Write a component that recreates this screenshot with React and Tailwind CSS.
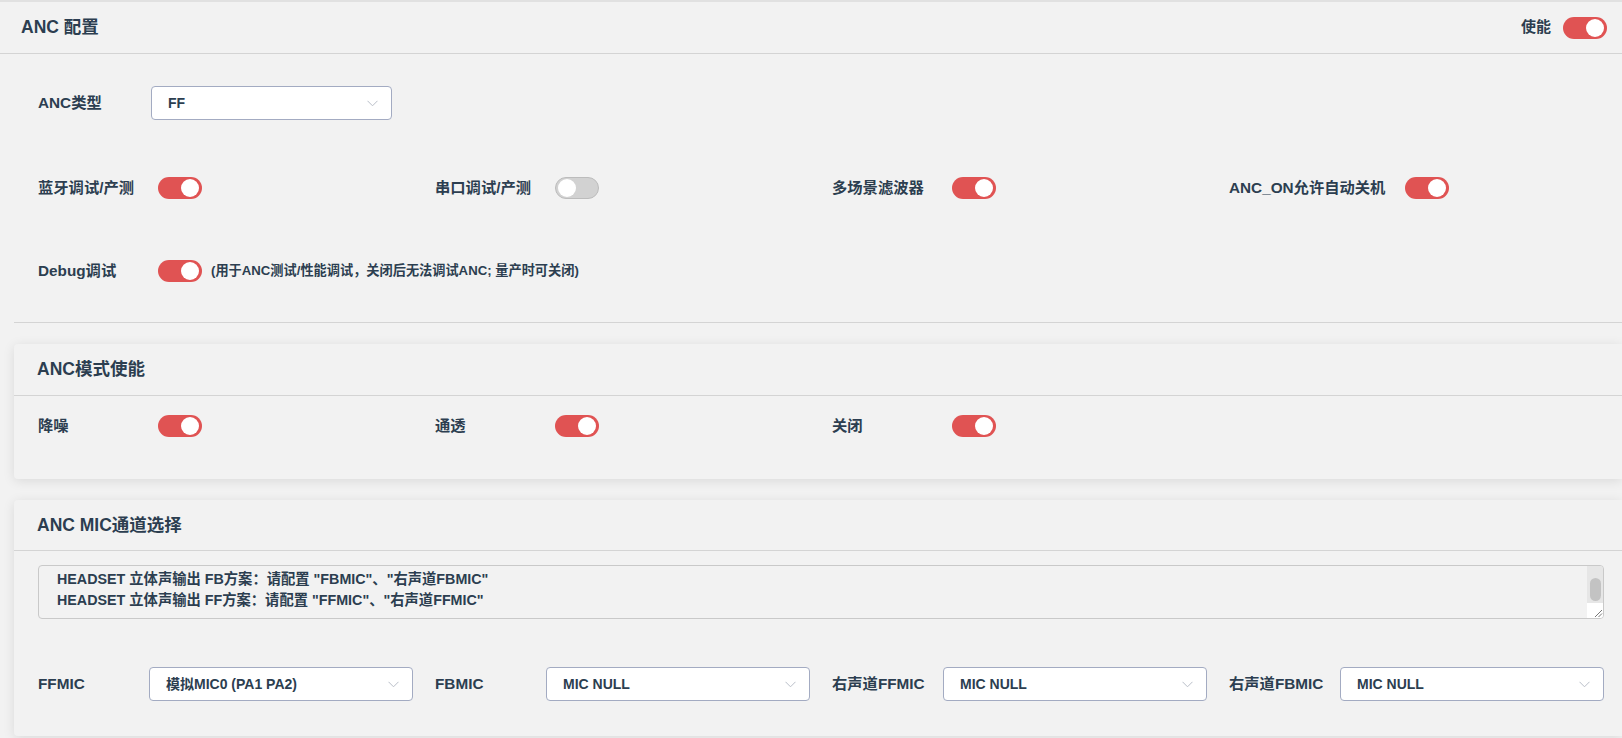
import React from "react";

function Toggle({ on = true }) {
  return (
    <div
      className={
        on
          ? "relative w-[44px] h-[22px] rounded-full bg-[#e05353] shrink-0"
          : "relative w-[44px] h-[22px] rounded-full bg-[#d2d2d2] border border-[#bcbcbc] shrink-0"
      }
    >
      <div
        className={
          on
            ? "absolute top-[2px] right-[3px] w-[18px] h-[18px] rounded-full bg-white"
            : "absolute top-[1px] left-[2px] w-[18px] h-[18px] rounded-full bg-white"
        }
      />
    </div>
  );
}

function Chevron() {
  return (
    <svg width="11" height="7" viewBox="0 0 11 7" className="shrink-0">
      <polyline points="0.5,0.8 5.5,5.8 10.5,0.8" fill="none" stroke="#b9bec8" strokeWidth="1" />
    </svg>
  );
}

function Select({ value, className = "" }) {
  return (
    <div
      className={
        "h-[34px] flex items-center justify-between bg-white border border-[#a3abc2] rounded-[4px] pl-[16px] pr-[13px] " +
        className
      }
    >
      <span className="text-[14px] font-bold text-[#2c3e50]">{value}</span>
      <Chevron />
    </div>
  );
}

function ToggleItem({ label, on = true }) {
  return (
    <div className="flex items-center">
      <span className="min-w-[100px] mr-[20px] text-[15.3px] font-semibold whitespace-nowrap">{label}</span>
      <Toggle on={on} />
    </div>
  );
}

function SelectItem({ label, value }) {
  return (
    <div className="flex items-center">
      <span className="w-[111px] shrink-0 text-[15.3px] font-semibold whitespace-nowrap">{label}</span>
      <Select value={value} className="flex-1" />
    </div>
  );
}

export default function App() {
  return (
    <div
      className="min-h-screen bg-[#f2f2f2] text-[#2c3e50] overflow-hidden"
      style={{ fontFamily: '"Liberation Sans", "Noto Sans CJK SC", sans-serif' }}
    >
      <div className="border-t-2 border-[#e1e1e1]">
        {/* header */}
        <div className="h-[52px] flex items-center justify-between pl-[21px] pr-[15px] border-b border-[#d4d4d4]">
          <h1 className="text-[17.5px] font-bold">ANC 配置</h1>
          <div className="flex items-center gap-[12px]">
            <span className="text-[15px] font-semibold">使能</span>
            <Toggle on />
          </div>
        </div>

        {/* body */}
        <div className="pl-[14px]">
          <div className="border-b border-[#d4d4d4] pl-[24px] pr-[18px] pt-[32px] pb-[34px]">
            <div className="flex items-center h-[34px]">
              <span className="w-[113px] text-[15.3px] font-semibold">ANC类型</span>
              <Select value="FF" className="w-[241px]" />
            </div>
            <div className="grid grid-cols-4 gap-x-[22px] h-[34px] items-center mt-[51px]">
              <ToggleItem label="蓝牙调试/产测" />
              <ToggleItem label="串口调试/产测" on={false} />
              <ToggleItem label="多场景滤波器" />
              <ToggleItem label="ANC_ON允许自动关机" />
            </div>
            <div className="flex items-center h-[34px] mt-[49px]">
              <span className="min-w-[100px] mr-[20px] text-[15.3px] font-semibold">Debug调试</span>
              <Toggle on />
              <span className="ml-[9px] text-[13.2px] font-semibold whitespace-nowrap">
                (用于ANC测试/性能调试，关闭后无法调试ANC; 量产时可关闭)
              </span>
            </div>
          </div>

          {/* card 2 */}
          <div className="mt-[21px] rounded-l-[4px] bg-[#f2f2f2] shadow-[0_2px_12px_0_rgba(0,0,0,0.1)]">
            <div className="h-[52px] flex items-center pl-[23px] border-b border-[#d4d4d4]">
              <h2 className="text-[17.5px] font-bold">ANC模式使能</h2>
            </div>
            <div className="pl-[24px] pr-[18px] pt-[19px] pb-[42px]">
              <div className="grid grid-cols-4 gap-x-[22px] h-[22px] items-center">
                <ToggleItem label="降噪" />
                <ToggleItem label="通透" />
                <ToggleItem label="关闭" />
              </div>
            </div>
          </div>

          {/* card 3 */}
          <div className="mt-[21px] rounded-l-[4px] bg-[#f2f2f2] shadow-[0_2px_12px_0_rgba(0,0,0,0.1)]">
            <div className="h-[51px] flex items-center pl-[23px] border-b border-[#d4d4d4]">
              <h2 className="text-[17.5px] font-bold">ANC MIC通道选择</h2>
            </div>
            <div className="pl-[24px] pr-[18px] pt-[14px] pb-[35px]">
              <div className="h-[54px] flex border border-[#c9c9c9] rounded-[4px] overflow-hidden">
                <div className="flex-1 pl-[18px] pt-[3px] text-[14.3px] font-bold leading-[21px] whitespace-nowrap">
                  <div>HEADSET 立体声输出 FB方案：请配置 "FBMIC"、"右声道FBMIC"</div>
                  <div>HEADSET 立体声输出 FF方案：请配置 "FFMIC"、"右声道FFMIC"</div>
                </div>
                <div className="w-[16px] flex flex-col">
                  <div className="flex-1 bg-[#e6e6e6] flex flex-col justify-end items-center pb-[2px]">
                    <div className="w-[11px] h-[23px] rounded-full bg-[#c3c3c3]" />
                  </div>
                  <div className="h-[15px] bg-white flex items-end justify-end">
                    <svg width="10" height="10" viewBox="0 0 10 10">
                      <line x1="2" y1="9" x2="9" y2="2" stroke="#555" strokeWidth="0.8" />
                      <line x1="5.5" y1="9" x2="9" y2="5.5" stroke="#555" strokeWidth="0.8" />
                    </svg>
                  </div>
                </div>
              </div>
              <div className="grid grid-cols-4 gap-x-[22px] mt-[48px]">
                <SelectItem label="FFMIC" value="模拟MIC0 (PA1 PA2)" />
                <SelectItem label="FBMIC" value="MIC NULL" />
                <SelectItem label="右声道FFMIC" value="MIC NULL" />
                <SelectItem label="右声道FBMIC" value="MIC NULL" />
              </div>
            </div>
          </div>
        </div>
      </div>
    </div>
  );
}
